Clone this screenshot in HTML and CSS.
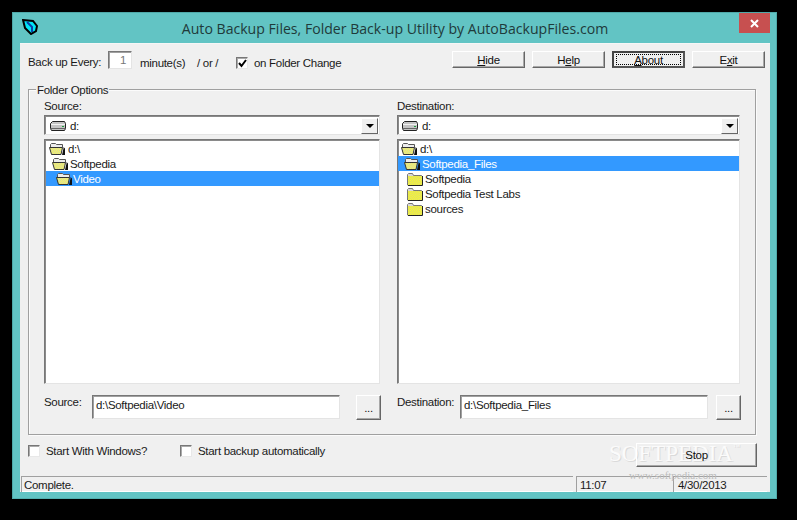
FILE: index.html
```html
<!DOCTYPE html>
<html lang="en">
<head>
<meta charset="utf-8">
<title>Auto Backup Files</title>
<link rel="stylesheet" href="styles.css">
</head>
<body>
<svg class="defs" width="0" height="0" aria-hidden="true">
  <defs>
    <pattern id="chk" width="2" height="2" patternUnits="userSpaceOnUse">
      <rect width="2" height="2" fill="#ffff20" shape-rendering="crispEdges"/>
      <rect width="1" height="1" fill="#d4d47c" shape-rendering="crispEdges"/>
      <rect x="1" y="1" width="1" height="1" fill="#d4d47c" shape-rendering="crispEdges"/>
    </pattern>
    <pattern id="chk2" width="2" height="2" patternUnits="userSpaceOnUse">
      <rect width="2" height="2" fill="#ffff50" shape-rendering="crispEdges"/>
      <rect width="1" height="1" fill="#d0d0b0" shape-rendering="crispEdges"/>
      <rect x="1" y="1" width="1" height="1" fill="#d0d0b0" shape-rendering="crispEdges"/>
    </pattern>
    <symbol id="open" viewBox="0 0 17 13">
      <path d="M1.500 6V2.500l1-1h4l1 1h6v3" fill="#ececec" stroke="#555" stroke-width="1"/>
      <path d="M.5 5.500h13l-1.500 7H2.500z" fill="url(#chk2)" stroke="#333" stroke-width="1"/>
      <path d="M14.500 5v1.500l-1.500 6.500h3V6.500z" fill="#111"/>
    </symbol>
    <symbol id="closed" viewBox="0 0 16 14">
      <path d="M.5 13V2.500l1-1h4l1 2h8V13z" fill="#d8d8d8" stroke="#777" stroke-width="1"/>
      <rect x="1" y="4" width="14" height="9" fill="url(#chk)"/>
      <path d="M1 13.500h14.500V4" fill="none" stroke="#222" stroke-width="1"/>
    </symbol>
    <symbol id="drive" viewBox="0 0 16 10">
      <path d="M2.500.5h12l1 2v5l-1 2H1.500l-1-2v-5z" fill="#c4c4c4" stroke="#222" stroke-width="1"/>
      <path d="M1 3.500h14" stroke="#f2f2f2" stroke-width="1"/>
      <path d="M1 7.500h14" stroke="#666" stroke-width="1"/>
      <rect x="12" y="5" width="2" height="1" fill="#1a9a3a"/>
    </symbol>
  </defs>
</svg>

<main class="window">
  <header class="titlebar">
    <svg class="app-icon" viewBox="0 0 16 16" width="16" height="16" aria-hidden="true">
      <path d="M1 1l10 1 4 5-1 5-5 3-6-6z" fill="#00e5f5" stroke="#000" stroke-width="2"/>
      <path d="M5 3l5 5v5" fill="none" stroke="#0a3fa8" stroke-width="2"/>
    </svg>
    <h1 class="title">Auto Backup Files, Folder Back-up Utility by AutoBackupFiles.com</h1>
    <div class="close" aria-label="Close">
      <svg viewBox="0 0 9 9" width="9" height="9" aria-hidden="true"><path d="M1 1l7 7M8 1L1 8" stroke="#fff" stroke-width="2"/></svg>
    </div>
  </header>

  <div class="client">
    <div class="mark">SOFTPEDIA<sup>™</sup></div>
    <div class="markurl">www.softpedia.com</div>
    <div class="content">
      <div class="toprow">
        <span class="every">Back up Every:</span>
        <span class="field minutes">1</span>
        <span class="unit">minute(s)</span>
        <span class="or">/ or /</span>
        <span class="check checked">
          <svg viewBox="0 0 9 9" width="9" height="9" aria-hidden="true"><path d="M1 4l2.500 3L8 1" fill="none" stroke="#000" stroke-width="2"/></svg>
        </span>
        <span class="change">on Folder Change</span>
        <div class="actions">
          <span class="btn"><u>H</u>ide</span>
          <span class="btn">H<u>e</u>lp</span>
          <span class="btn focused"><span class="focus-ring"><u>A</u>bout</span></span>
          <span class="btn">E<u>x</u>it</span>
        </div>
      </div>

      <section class="group">
        <span class="legend">Folder Options</span>
        <div class="col">
          <div class="lbl">Source:</div>
          <div class="combo">
            <svg class="drive"><use href="#drive"/></svg>
            <span class="combo-text">d:</span>
            <span class="arrow"><i></i></span>
          </div>
          <div class="tree">
            <div class="row lv0"><svg class="fo"><use href="#open"/></svg>d:\</div>
            <div class="row lv1"><svg class="fo"><use href="#open"/></svg>Softpedia</div>
            <div class="row lv2 sel"><svg class="fo"><use href="#open"/></svg>Video</div>
          </div>
          <div class="pathrow">
            <span class="pathlbl src">Source:</span>
            <span class="field path">d:\Softpedia\Video</span>
            <span class="btn dots">...</span>
          </div>
        </div>
        <div class="col">
          <div class="lbl">Destination:</div>
          <div class="combo dest">
            <svg class="drive"><use href="#drive"/></svg>
            <span class="combo-text">d:</span>
            <span class="arrow"><i></i></span>
          </div>
          <div class="tree dest">
            <div class="row lv0d"><svg class="fo"><use href="#open"/></svg>d:\</div>
            <div class="row lv1d sel"><svg class="fo"><use href="#open"/></svg>Softpedia_Files</div>
            <div class="row lv2d"><svg class="fc"><use href="#closed"/></svg>Softpedia</div>
            <div class="row lv2d"><svg class="fc"><use href="#closed"/></svg>Softpedia Test Labs</div>
            <div class="row lv2d"><svg class="fc"><use href="#closed"/></svg>sources</div>
          </div>
          <div class="pathrow">
            <span class="pathlbl dst">Destination:</span>
            <span class="field path">d:\Softpedia_Files</span>
            <span class="btn dots">...</span>
          </div>
        </div>
      </section>

      <div class="bottomrow">
        <span class="check"></span>
        <span class="opt win">Start With Windows?</span>
        <span class="check"></span>
        <span class="opt">Start backup automatically</span>
        <span class="btn stop">Stop</span>
      </div>
    </div>

    <footer class="status">
      <span class="pane msg">Complete.</span>
      <span class="pane time">11:07</span>
      <span class="pane date">4/30/2013</span>
    </footer>
  </div>
</main>
</body>
</html>
```

FILE: styles.css
```css
* { box-sizing: border-box; }
html, body { margin: 0; height: 100%; }
body {
  background: #000;
  padding: 12px 0 0 12px;
  font-family: "Liberation Sans", Arial, sans-serif;
  font-size: 11.500px;
  letter-spacing: -0.3px;
  color: #1a1a1a;
  overflow: hidden;
  white-space: nowrap;
}
.defs { position: absolute; }
.window {
  position: relative;
  width: 765px;
  height: 487px;
  background: #62c4c4;
  border: 1px solid #4fa9a9;
  border-bottom-color: #52b0b0;
  padding: 0 6px 6px 7px;
  display: flex;
  flex-direction: column;
}
.titlebar {
  height: 30px;
  flex: none;
  display: flex;
  align-items: center;
  padding-left: 2px;
}
.app-icon { flex: none; margin-top: -3px; }
.title {
  flex: 1;
  margin: 0;
  padding-right: 18px;
  text-align: center;
  letter-spacing: 0;
  font: 400 14.100px "Open Sans", "Noto Sans", sans-serif;
  color: #1f3a3a;
}
.close {
  position: absolute;
  top: 0;
  right: 6px;
  width: 31px;
  height: 20px;
  background: #c75050;
  display: flex;
  align-items: center;
  justify-content: center;
}
.client {
  position: relative;
  flex: 1;
  background: #f0f0f0;
  display: flex;
  flex-direction: column;
  border-top: 1px solid #f6f6f6;
}
.content {
  flex: 1;
  padding: 7px 5px 0 8px;
}
.toprow {
  display: flex;
  align-items: flex-start;
  height: 18px;
}
.every { width: 80px; margin-top: 5px; line-height: 13px; }
.field {
  display: block;
  background: #fff;
  border: 1px solid;
  border-color: #777 #e4e4e4 #e4e4e4 #777;
  box-shadow: inset 1px 1px 0 #a0a0a0;
}
.minutes {
  width: 24px;
  height: 18px;
  text-align: right;
  padding: 1px 5px 0 0;
  color: #777;
  line-height: 15px;
}
.unit { margin-left: 8px; margin-top: 6px; line-height: 13px; width: 57px; }
.or { margin-top: 6px; line-height: 13px; width: 39px; }
.check {
  display: flex;
  align-items: center;
  justify-content: center;
  flex: none;
  width: 12px;
  height: 12px;
  margin-top: 2px;
  background: #fff;
  border: 1px solid;
  border-color: #777 #e8e8e8 #e8e8e8 #777;
  box-shadow: inset 1px 1px 0 #aaa;
}
.checked { margin-top: 6px; }
.change { margin-left: 6px; margin-top: 6px; line-height: 13px; }
.actions {
  margin-left: auto;
  display: flex;
  gap: 7px;
}
.btn {
  display: flex;
  align-items: center;
  justify-content: center;
  width: 73px;
  height: 17px;
  background: #f0f0f0;
  border: 1px solid;
  border-color: #fff #666 #666 #fff;
  box-shadow: inset -1px -1px 0 #a8a8a8;
  color: #111;
}
.focused {
  border: 2px solid;
  border-color: #444 #555 #555 #444;
  box-shadow: none;
}
.focus-ring {
  display: block;
  width: 65px;
  height: 11px;
  line-height: 10px;
  text-align: center;
  border: 1px dotted #000;
}
.group {
  position: relative;
  margin-top: 20px;
  height: 346px;
  width: 728px;
  border: 1px solid #a0a0a0;
  box-shadow: inset 1px 1px 0 #fbfbfb, 1px 1px 0 #fbfbfb;
  padding: 9px 0 0 15px;
  display: grid;
  grid-template-columns: 337px 344px;
  column-gap: 16px;
}
.legend {
  position: absolute;
  top: -7px;
  left: 7px;
  padding: 0 1px;
  line-height: 14px;
  background: #f0f0f0;
}
.lbl { height: 16px; line-height: 14px; }
.combo {
  width: 336px;
  height: 20px;
  display: flex;
  align-items: center;
  background: #fff;
  border: 1px solid;
  border-color: #777 #e4e4e4 #e4e4e4 #777;
  box-shadow: inset 1px 1px 0 #8a8a8a;
  padding: 1px 1px 0 5px;
}
.combo.dest { width: 343px; padding-left: 4px; }
.drive { width: 16px; height: 10px; flex: none; }
.combo-text { margin-left: 4px; }
.arrow {
  margin-left: auto;
  width: 17px;
  height: 16px;
  background: #f0f0f0;
  border: 1px solid;
  border-color: #fff #666 #666 #fff;
  display: flex;
  align-items: center;
  justify-content: center;
}
.arrow i {
  display: block;
  width: 0;
  height: 0;
  border-style: solid;
  border-width: 4px 4px 0;
  border-color: #000 transparent transparent;
}
.tree {
  width: 336px;
  height: 245px;
  margin-top: 4px;
  padding: 1px 0 0 1px;
  background: #fff;
  border: 1px solid;
  border-color: #777 #e4e4e4 #e4e4e4 #777;
  box-shadow: inset 1px 1px 0 #8a8a8a;
}
.tree.dest { width: 343px; padding-left: 0; }
.row {
  height: 15px;
  display: flex;
  align-items: center;
}
.sel { background: #3399ff; color: #fff; }
.fo { width: 17px; height: 13px; flex: none; }
.fc { width: 16px; height: 14px; flex: none; margin-right: 2px; align-self: flex-start; margin-top: 1px; }
.lv0 { padding-left: 3px; }
.lv0 .fo { margin-right: 2px; }
.lv1 { padding-left: 6px; }
.lv1 .fo { margin-right: 1px; }
.lv2 { padding-left: 10px; }
.lv0d { padding-left: 3px; }
.lv0d .fo { margin-right: 2px; }
.lv1d { padding-left: 6px; }
.lv1d .fo { margin-right: 1px; }
.lv2d { padding-left: 9px; }
.pathrow {
  display: flex;
  margin-top: 11px;
  height: 25px;
}
.pathlbl { line-height: 14px; }
.src { width: 48px; }
.dst { width: 63px; }
.path {
  width: 248px;
  height: 24px;
  padding: 1px 0 0 3px;
  line-height: 16px;
}
.dots {
  width: 25px;
  height: 25px;
  margin-left: 16px;
}
.dst + .path + .dots { margin-left: 8px; }
.bottomrow {
  display: flex;
  align-items: flex-start;
  margin-top: 8px;
  height: 24px;
}
.opt { margin-left: 6px; margin-top: 2px; line-height: 12px; }
.win { width: 134px; }
.stop {
  position: relative;
  margin-left: auto;
  margin-right: 8px;
  width: 121px;
  height: 24px;
  background: transparent;
}
.status {
  flex: none;
  height: 16px;
  display: flex;
  padding-left: 1px;
  background: #f0f0f0;
}
.pane {
  display: block;
  height: 16px;
  padding: 1px 0 0 2px;
  line-height: 14px;
  border-top: 1px solid #a0a0a0;
  border-left: 1px solid #a0a0a0;
  box-shadow: inset 0 -1px 0 #fff;
}
.msg { width: 552px; }
.time { width: 94px; margin-left: 3px; padding-left: 3px; }
.date { width: 94px; margin-left: 3px; padding-left: 4px; }
.mark {
  position: absolute;
  left: 589px;
  top: 397px;
  font: 400 23px "Liberation Serif", serif;
  letter-spacing: 0;
  color: #fbfbfb;
  text-shadow: 1px 1px 0 #dadada;
}
.mark sup { font-size: 7px; vertical-align: 12px; }
.markurl {
  position: absolute;
  left: 609px;
  top: 425px;
  letter-spacing: 0;
  font: 400 11px "Liberation Serif", serif;
  color: #bcbcbc;
}
```
